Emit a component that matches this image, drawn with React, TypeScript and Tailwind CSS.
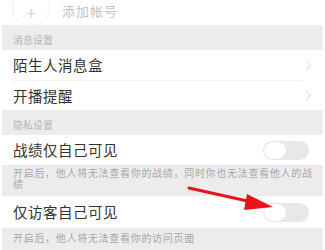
import React from "react";

const Chevron = () => (
  <svg width="7" height="11" viewBox="0 0 7 11" className="mr-[13px]">
    <path d="M1 1 L5.5 5.5 L1 10" fill="none" stroke="#e6e6e6" strokeWidth="1.3" />
  </svg>
);

const Toggle = () => (
  <div className="w-[46px] h-[19px] rounded-full bg-[#e8e8e8] relative mr-[16px]">
    <div className="absolute left-[1px] top-[1px] w-[22px] h-[17px] rounded-full bg-white shadow-[0_0_1px_rgba(0,0,0,0.12)]" />
  </div>
);

export default function App() {
  return (
    <div
      className="w-[325px] h-[250px] overflow-hidden bg-white relative"
      style={{ fontFamily: '"Noto Sans CJK SC", "Noto Sans", sans-serif' }}
    >
      <div className="h-[25px] flex items-center">
        <div className="ml-[12px] w-[38px] h-[38px] -mt-[12px] rounded-full border border-[#f3f3f3] flex items-center justify-center text-[#cccccc] text-[18px] font-light leading-none pt-[10px]">
          +
        </div>
        <div className="ml-[12px] text-[13px] text-[#c2c2c2] tracking-[1px] -mt-[4px]">添加帐号</div>
      </div>

      <div className="mx-[2px] h-[25px] bg-[#ececec] flex items-end pb-[3px] px-[11px] text-[10px] text-[#b5b5b5]">
        消息设置
      </div>

      <div className="h-[30px] flex items-center justify-between">
        <div className="ml-[13px] text-[14.5px] text-[#333] tracking-[0.5px]">陌生人消息盒</div>
        <Chevron />
      </div>
      <div className="ml-[12px] mr-[22px] h-px bg-[#f2f2f2]" />
      <div className="h-[29px] flex items-center justify-between">
        <div className="ml-[13px] text-[14.5px] text-[#333] tracking-[0.5px]">开播提醒</div>
        <Chevron />
      </div>

      <div className="mx-[2px] h-[25px] bg-[#ececec] flex items-end pb-[3px] px-[11px] text-[10px] text-[#b5b5b5]">
        隐私设置
      </div>

      <div className="h-[30px] flex items-center justify-between">
        <div className="ml-[13px] text-[14.5px] text-[#333] tracking-[0.5px]">战绩仅自己可见</div>
        <Toggle />
      </div>

      <div className="mx-[2px] h-[31px] bg-[#ececec] pl-[11px] pr-[8px] pt-[2px] text-[10px] leading-[11px] tracking-[0.7px] text-[#a8a8a8]">
        开启后，他人将无法查看你的战绩，同时你也无法查看他人的战绩
      </div>

      <div className="h-[32px] flex items-center justify-between">
        <div className="ml-[13px] text-[14.5px] text-[#333] tracking-[0.5px]">仅访客自己可见</div>
        <Toggle />
      </div>

      <div className="mx-[2px] h-[22px] bg-[#ececec] px-[11px] pt-[4px] text-[10px] leading-[11px] tracking-[0.7px] text-[#a8a8a8]">
        开启后，他人将无法查看你的访问页面
      </div>

      <svg className="absolute left-0 top-0 pointer-events-none" width="325" height="250">
        <line x1="189" y1="188" x2="252" y2="202" stroke="#e8141a" strokeWidth="3" strokeLinecap="round" />
        <polygon points="273,207 247,194 244,210" fill="#e8141a" />
      </svg>
    </div>
  );
}
